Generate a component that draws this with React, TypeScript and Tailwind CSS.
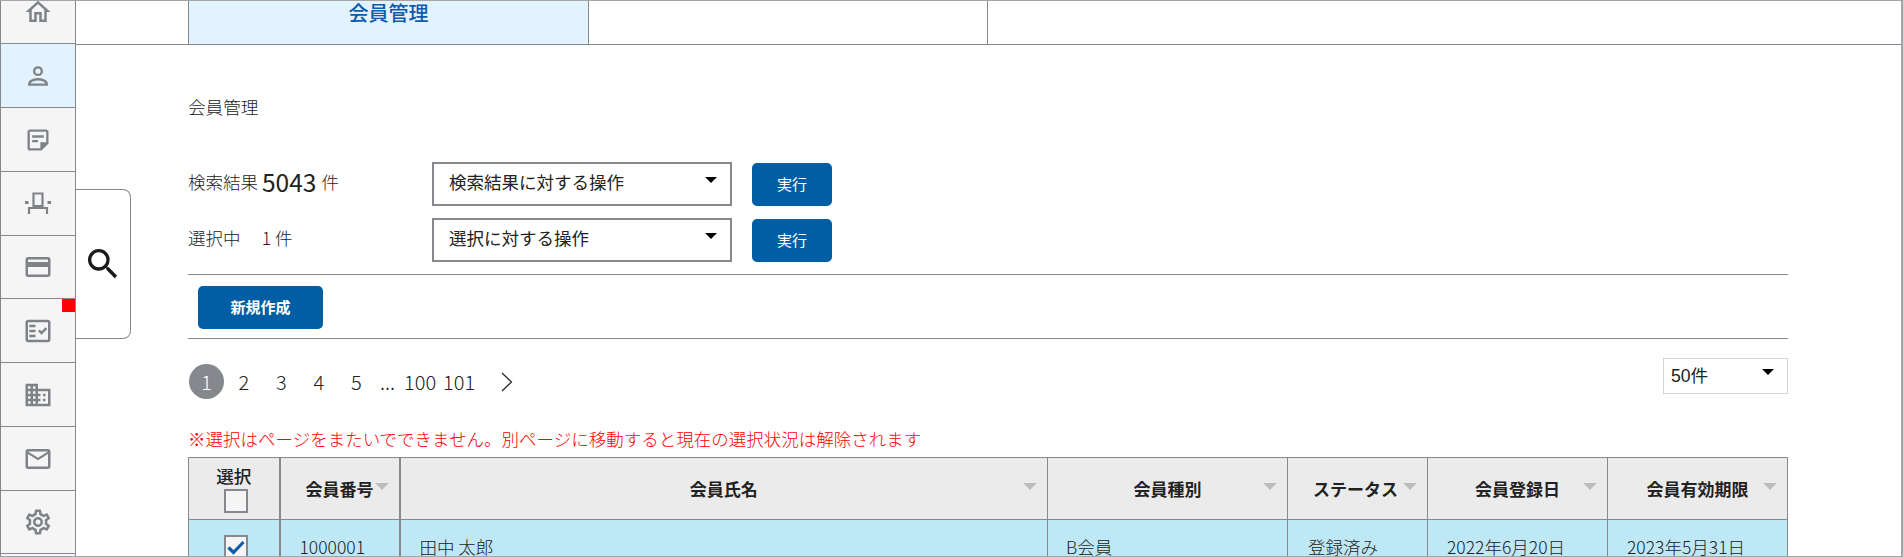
import {
  MdOutlineHome,
  MdOutlineStickyNote2,
  MdOutlineCreditCard,
  MdOutlineFactCheck,
  MdDomain,
  MdMailOutline,
  MdOutlineSettings,
  MdSearch,
} from "react-icons/md";

const font = "font-['Noto_Sans_CJK_JP','Noto_Sans',sans-serif]";

function PersonIcon() {
  return (
    <svg viewBox="0 0 24 24" className="w-[26px] h-[26px]" fill="none" stroke="#7f8388" strokeWidth="2.200">
      <circle cx="12" cy="7.500" r="3.500" />
      <path d="M4 20v-1c0-2.600 5-4 8-4s8 1.400 8 4v1z" />
    </svg>
  );
}

function SeatIcon() {
  return (
    <svg viewBox="0 0 26 23" className="w-[26px] h-[23px]" fill="none" stroke="#7f8388" strokeWidth="2.200">
      <path d="M8.500 14V1.500h9V14z" />
      <path d="M4 22v-6h18v6" />
      <rect x="0" y="9" width="3.500" height="3" fill="#7f8388" stroke="none" />
      <rect x="22.500" y="9" width="3.500" height="3" fill="#7f8388" stroke="none" />
    </svg>
  );
}

const navItems = [
  { icon: <MdOutlineHome size={30} color="#7f8388" />, h: "h-[64px]", active: false },
  { icon: <PersonIcon />, h: "h-[64px]", active: true },
  { icon: <MdOutlineStickyNote2 size={28} color="#7f8388" />, h: "h-[64px]", active: false },
  { icon: <SeatIcon />, h: "h-[64px]", active: false },
  { icon: <MdOutlineCreditCard size={30} color="#7f8388" />, h: "h-[63px]", active: false },
  { icon: <MdOutlineFactCheck size={30} color="#7f8388" />, h: "h-[64px]", active: false },
  { icon: <MdDomain size={30} color="#7f8388" />, h: "h-[64px]", active: false },
  { icon: <MdMailOutline size={30} color="#7f8388" />, h: "h-[64px]", active: false },
  { icon: <MdOutlineSettings size={30} color="#7f8388" />, h: "h-[63px]", active: false },
];

function Sidebar() {
  return (
    <div className="w-[76px] shrink-0 -mt-[21px] border-x border-[#85888c] bg-[#f5f5f5]">
      {navItems.map((item, i) => (
        <div
          key={i}
          className={`relative ${item.h} border-b border-[#85888c] flex items-center justify-center ${
            item.active ? "bg-[#e3f3fe]" : ""
          }`}
        >
          {item.icon}
          {i === 5 && <span className="absolute right-0 top-0 w-[13px] h-[13px] bg-[#ff0000]" />}
        </div>
      ))}
    </div>
  );
}

function SelectBox({ label }: { label: string }) {
  return (
    <div className="w-[300px] h-[44px] border-2 border-[#85888c] bg-white flex items-center justify-between pl-[15px] pr-[13px] text-[17.500px] text-[#222]">
      <span className="pb-[3px]">{label}</span>
      <span className="w-0 h-0 mb-[8px] border-x-[6px] border-x-transparent border-t-[6px] border-t-black" />
    </div>
  );
}

function BlueButton({ label, w, bold }: { label: string; w: string; bold?: boolean }) {
  return (
    <button className={`${w} h-[43px] rounded-[5px] bg-[#015ea4] text-white text-[15px] ${bold ? "font-bold" : ""}`}>
      {label}
    </button>
  );
}

function SortMark() {
  return <span className="w-0 h-0 border-x-[7px] border-x-transparent border-t-[7px] border-t-[#bdbdbd]" />;
}

const headers = [
  { label: "会員番号", w: "w-[120px]", thick: true, text: "pl-[25px] text-left" },
  { label: "会員氏名", w: "w-[648px]", thick: false, text: "text-center" },
  { label: "会員種別", w: "w-[240px]", thick: false, text: "text-center" },
  { label: "ステータス", w: "w-[140px]", thick: false, text: "pl-[25px] text-left" },
  { label: "会員登録日", w: "w-[180px]", thick: false, text: "text-center" },
  { label: "会員有効期限", w: "w-[180px]", thick: false, text: "text-center" },
];

const row = [
  { v: "1000001", c: "pl-[19px]", thick: true },
  { v: "田中 太郎", c: "pl-[19px]", thick: false },
  { v: "B会員", c: "pl-[18px]", thick: false },
  { v: "登録済み", c: "pl-[20px]", thick: false },
  { v: "2022年6月20日", c: "pl-[19px]", thick: false },
  { v: "2023年5月31日", c: "pl-[19px]", thick: false },
];

function MemberTable() {
  return (
    <table className="table-fixed w-[1600px] border-collapse text-[17px] text-[#222]">
      <thead>
        <tr className="h-[62px] bg-[#ebebeb]">
          <th className="w-[91px] border border-[#85888c] border-r-2 font-medium align-top pt-[5px]">
            <div className="leading-[26px] text-[17.600px]">選択</div>
            <div className="ml-[35px] w-[24px] h-[24px] border-2 border-[#85888c] bg-[#f5f5f5]" />
          </th>
          {headers.map((h) => (
            <th
              key={h.label}
              className={`relative ${h.w} ${h.text} border border-[#85888c] ${h.thick ? "border-r-2" : ""} font-bold`}
            >
              {h.label}
              <span className="absolute right-[10px] top-[25px] flex">
                <SortMark />
              </span>
            </th>
          ))}
        </tr>
      </thead>
      <tbody>
        <tr className="h-[62px] bg-[#bee8f6] text-[17.500px]">
          <td className="border border-[#85888c] border-r-2 align-top pt-[15px]">
            <div className="ml-[35px] w-[24px] h-[24px] border-2 border-[#85888c] bg-[#f5f5f5] flex items-center justify-center">
              <svg viewBox="0 0 20 20" className="w-[20px] h-[20px]" fill="none" stroke="#0b5cad" strokeWidth="3.200">
                <path d="M2.500 10.500l5 5L17.500 5" />
              </svg>
            </div>
          </td>
          {row.map((c) => (
            <td
              key={c.v}
              className={`${c.c} border border-[#85888c] ${c.thick ? "border-r-2" : ""} align-top pt-[14px] font-light`}
            >
              {c.v}
            </td>
          ))}
        </tr>
      </tbody>
    </table>
  );
}

function Pagination() {
  const pages = ["2", "3", "4", "5"];
  return (
    <div className="flex items-center text-[20px] font-light text-[#222] ml-[1px]">
      <span className="w-[35px] h-[35px] mr-[1px] rounded-full bg-[#85888c] text-white flex items-center justify-center">
        1
      </span>
      {pages.map((p) => (
        <span key={p} className="w-[37.500px] text-center">
          {p}
        </span>
      ))}
      <span className="w-[29px] text-left text-[20px] pl-[5px]">...</span>
      <span className="mr-[7px]">100</span>
      <span>101</span>
      <svg viewBox="0 0 12 20" className="w-[12px] h-[20px] ml-[26px]" fill="none" stroke="#222" strokeWidth="1.200">
        <path d="M1 1l9.500 9L1 19" />
      </svg>
    </div>
  );
}

export default function App() {
  return (
    <div className={`relative w-[1903px] h-[557px] overflow-hidden bg-white flex ${font} border-t border-r-2 border-b border-[#a3a5a8]`}>
      <Sidebar />

      <div className="relative flex-1 min-w-0">
        <div className="h-[44px] border-b border-[#85888c] flex pl-[112px]">
          <div className="w-[401px] bg-[#e3f3fe] border-x border-[#85888c] text-center text-[20px] font-medium text-[#0b5cad] leading-[24px]">
            会員管理
          </div>
          <div className="w-[399px] border-r border-[#85888c]" />
        </div>

        {/* search tab */}
        <div className="absolute left-0 top-[188px] w-[55px] h-[150px] bg-white border border-l-0 border-[#85888c] rounded-r-[8px] flex items-center justify-center">
          <MdSearch size={40} color="#1a1a1a" />
        </div>

        <div className="w-[1600px] ml-[112px] text-[#222]">
          <h1 className="mt-[50px] text-[17.600px] font-light leading-[24px]">会員管理</h1>

          <div className="mt-[43px] flex items-center h-[44px]">
            <div className="w-[244px] flex items-center font-light text-[17.500px] pb-[4px]">
              <span>検索結果</span>
              <span className="ml-[4px] mr-[5px] text-[24.500px] font-normal leading-none">5043</span>
              <span>件</span>
            </div>
            <SelectBox label="検索結果に対する操作" />
            <div className="ml-[20px] mt-[1px]">
              <BlueButton label="実行" w="w-[80px]" />
            </div>
          </div>

          <div className="mt-[12px] flex items-center h-[44px]">
            <div className="w-[244px] font-light text-[17.500px] pb-[3px]">選択中　 1 件</div>
            <SelectBox label="選択に対する操作" />
            <div className="ml-[20px] mt-[1px]">
              <BlueButton label="実行" w="w-[80px]" />
            </div>
          </div>

          <div className="mt-[12px] border-t border-[#85888c] pt-[11px] pb-[9px] pl-[10px]">
            <BlueButton label="新規作成" w="w-[125px]" bold />
          </div>

          <div className="border-t border-[#85888c] pt-[19px] flex items-start justify-between">
            <div className="pt-[6px]">
              <Pagination />
            </div>
            <div className="w-[125px] h-[36px] border border-[#d5d5d5] bg-white flex items-center justify-between pl-[7px] pr-[13px] text-[17.600px] font-['Liberation_Sans','Noto_Sans_CJK_JP',sans-serif]">
              <span>50件</span>
              <span className="w-0 h-0 mb-[8px] border-x-[6px] border-x-transparent border-t-[6px] border-t-black" />
            </div>
          </div>

          <p className="mt-[28px] text-[17.500px] font-light leading-[24px] text-[#ff0000]">
            ※選択はページをまたいでできません。別ページに移動すると現在の選択状況は解除されます
          </p>

          <div className="mt-[6px]">
            <MemberTable />
          </div>
        </div>
      </div>
    </div>
  );
}
